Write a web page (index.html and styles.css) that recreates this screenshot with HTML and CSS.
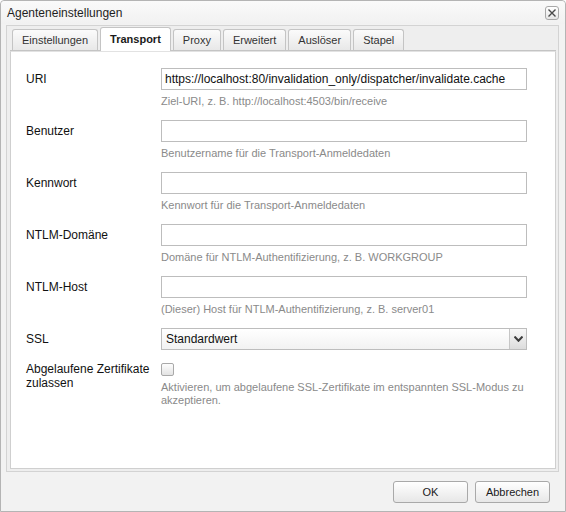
FILE: index.html
```html
<!DOCTYPE html>
<html lang="de">
<head>
<meta charset="utf-8">
<title>Agenteneinstellungen</title>
<link rel="stylesheet" href="styles.css">
</head>
<body>
<div class="dialog">
  <div class="titlebar">
    <span class="title">Agenteneinstellungen</span>
    <button class="close" type="button" aria-label="Schließen">
      <svg width="10" height="10" viewBox="0 0 10 10"><path d="M1.5 1.5 L8.5 8.5 M8.5 1.5 L1.5 8.5" stroke="#4a4a4a" stroke-width="1.4" fill="none"/></svg>
    </button>
  </div>
  <div class="tabframe">
    <div class="tabstrip">
      <div class="tab">Einstellungen</div>
      <div class="tab active">Transport</div>
      <div class="tab">Proxy</div>
      <div class="tab">Erweitert</div>
      <div class="tab">Auslöser</div>
      <div class="tab">Stapel</div>
    </div>
    <div class="panel">
      <div class="row">
        <label class="lbl">URI</label>
        <div class="field">
          <input class="text" type="text" value="https://localhost:80/invalidation_only/dispatcher/invalidate.cache">
          <div class="help">Ziel-URI, z. B. http://localhost:4503/bin/receive</div>
        </div>
      </div>
      <div class="row">
        <label class="lbl">Benutzer</label>
        <div class="field">
          <input class="text" type="text" value="">
          <div class="help">Benutzername für die Transport-Anmeldedaten</div>
        </div>
      </div>
      <div class="row">
        <label class="lbl">Kennwort</label>
        <div class="field">
          <input class="text" type="password" value="">
          <div class="help">Kennwort für die Transport-Anmeldedaten</div>
        </div>
      </div>
      <div class="row">
        <label class="lbl">NTLM-Domäne</label>
        <div class="field">
          <input class="text" type="text" value="">
          <div class="help">Domäne für NTLM-Authentifizierung, z. B. WORKGROUP</div>
        </div>
      </div>
      <div class="row">
        <label class="lbl">NTLM-Host</label>
        <div class="field">
          <input class="text" type="text" value="">
          <div class="help">(Dieser) Host für NTLM-Authentifizierung, z. B. server01</div>
        </div>
      </div>
      <div class="row row-select">
        <label class="lbl">SSL</label>
        <div class="field">
          <div class="combo">
            <span class="combo-text">Standardwert</span>
            <span class="trigger">
              <svg width="9" height="6" viewBox="0 0 9 6"><path d="M0.5 0.5 L4.5 4.8 L8.5 0.5" stroke="#3c3c3c" stroke-width="2" fill="none"/></svg>
            </span>
          </div>
        </div>
      </div>
      <div class="row">
        <label class="lbl">Abgelaufene Zertifikate zulassen</label>
        <div class="field">
          <div class="check"></div>
          <div class="help help-check">Aktivieren, um abgelaufene SSL-Zertifikate im entspannten SSL-Modus zu<br>akzeptieren.</div>
        </div>
      </div>
    </div>
  </div>
  <div class="footer">
    <button class="btn" type="button">OK</button>
    <button class="btn" type="button">Abbrechen</button>
  </div>
</div>
</body>
</html>
```
FILE: styles.css
```css
* { box-sizing: border-box; }
html, body { margin: 0; padding: 0; }
body {
  background: #fff;
  font-family: "Liberation Sans", Arial, sans-serif;
  color: #1a1a1a;
}
.dialog {
  width: 566px;
  height: 512px;
  border: 1px solid #b4b4b4;
  border-radius: 4px 4px 0 0;
  background: #f2f2f2;
  display: flex;
  flex-direction: column;
}
.titlebar {
  height: 23px;
  flex: none;
  display: flex;
  align-items: center;
  justify-content: space-between;
  padding: 0 6px 0 6px;
  background: linear-gradient(#fafafa, #f1f1f1);
  border-radius: 4px 4px 0 0;
}
.title {
  font-size: 12px;
  color: #1e1e1e;
}
.close {
  width: 14px;
  height: 14px;
  padding: 0;
  border: 1px solid #a8a8a8;
  border-radius: 3px;
  background: linear-gradient(#ffffff, #e6e6e6);
  display: flex;
  align-items: center;
  justify-content: center;
}
.tabframe {
  height: 447px;
  flex: none;
  margin: 1px 6px 0 5px;
  border: 1px solid #d3d3d3;
  background: #eeeeee;
  padding: 0 2px 2px 3px;
  display: flex;
  flex-direction: column;
}
.tabstrip {
  height: 25px;
  flex: none;
  display: flex;
  align-items: flex-end;
  gap: 2px;
  padding-left: 2px;
  border-bottom: 1px solid #c4c4c4;
}
.tab {
  height: 21px;
  padding: 0 9px;
  border: 1px solid #c4c4c4;
  border-bottom: none;
  border-radius: 3px 3px 0 0;
  background: linear-gradient(#fbfbfb, #e8e8e8);
  font-size: 11px;
  line-height: 20px;
  color: #333;
  white-space: nowrap;
}
.tab.active {
  height: 24px;
  margin-bottom: -1px;
  background: #fff;
  font-weight: bold;
  color: #1a1a1a;
  line-height: 22px;
}
.panel {
  flex: 1;
  background: #fff;
  border: 1px solid #cfcfcf;
  border-top-color: #e2e2e2;
  padding: 16px 0 0 15px;
}
.row {
  display: grid;
  grid-template-columns: 135px 366px;
}
.lbl {
  padding-top: 4px;
  padding-right: 6px;
  font-size: 12px;
  line-height: 14px;
  color: #111;
}
.text {
  display: block;
  width: 366px;
  height: 22px;
  margin: 0;
  border: 1px solid #bdbdbd;
  padding: 0 3px;
  background: #fff;
  font-family: "Liberation Sans", Arial, sans-serif;
  font-size: 12px;
  color: #111;
  outline: none;
}
.help {
  margin: 4px 0 12px;
  font-size: 11px;
  line-height: 14px;
  color: #8a8a8a;
  white-space: nowrap;
}
.row-select .field {
  padding-bottom: 8px;
}
.combo {
  display: flex;
  width: 366px;
  height: 22px;
  border: 1px solid #bdbdbd;
  background: linear-gradient(#ffffff, #f2f2f2);
}
.combo-text {
  flex: 1;
  padding-left: 4px;
  font-size: 12px;
  line-height: 20px;
  color: #111;
}
.trigger {
  width: 17px;
  border-left: 1px solid #c6c6c6;
  background: linear-gradient(#f8f8f8, #dcdcdc);
  display: flex;
  align-items: center;
  justify-content: center;
}
.check {
  margin-top: 5px;
  width: 13px;
  height: 13px;
  border: 1px solid #a9a9a9;
  border-radius: 2px;
  background: linear-gradient(#fdfdfd, #e3e3e3);
}
.help-check {
  margin-top: 5px;
  line-height: 13px;
}
.footer {
  flex: 1;
  display: flex;
  justify-content: flex-end;
  align-items: flex-start;
  gap: 7px;
  padding: 9px 15px 0 0;
}
.btn {
  width: 75px;
  height: 22px;
  padding: 0;
  border: 1px solid #a9a9a9;
  border-radius: 3px;
  background: linear-gradient(#ffffff, #e7e7e7);
  font-family: "Liberation Sans", Arial, sans-serif;
  font-size: 11px;
  color: #1a1a1a;
}
```
